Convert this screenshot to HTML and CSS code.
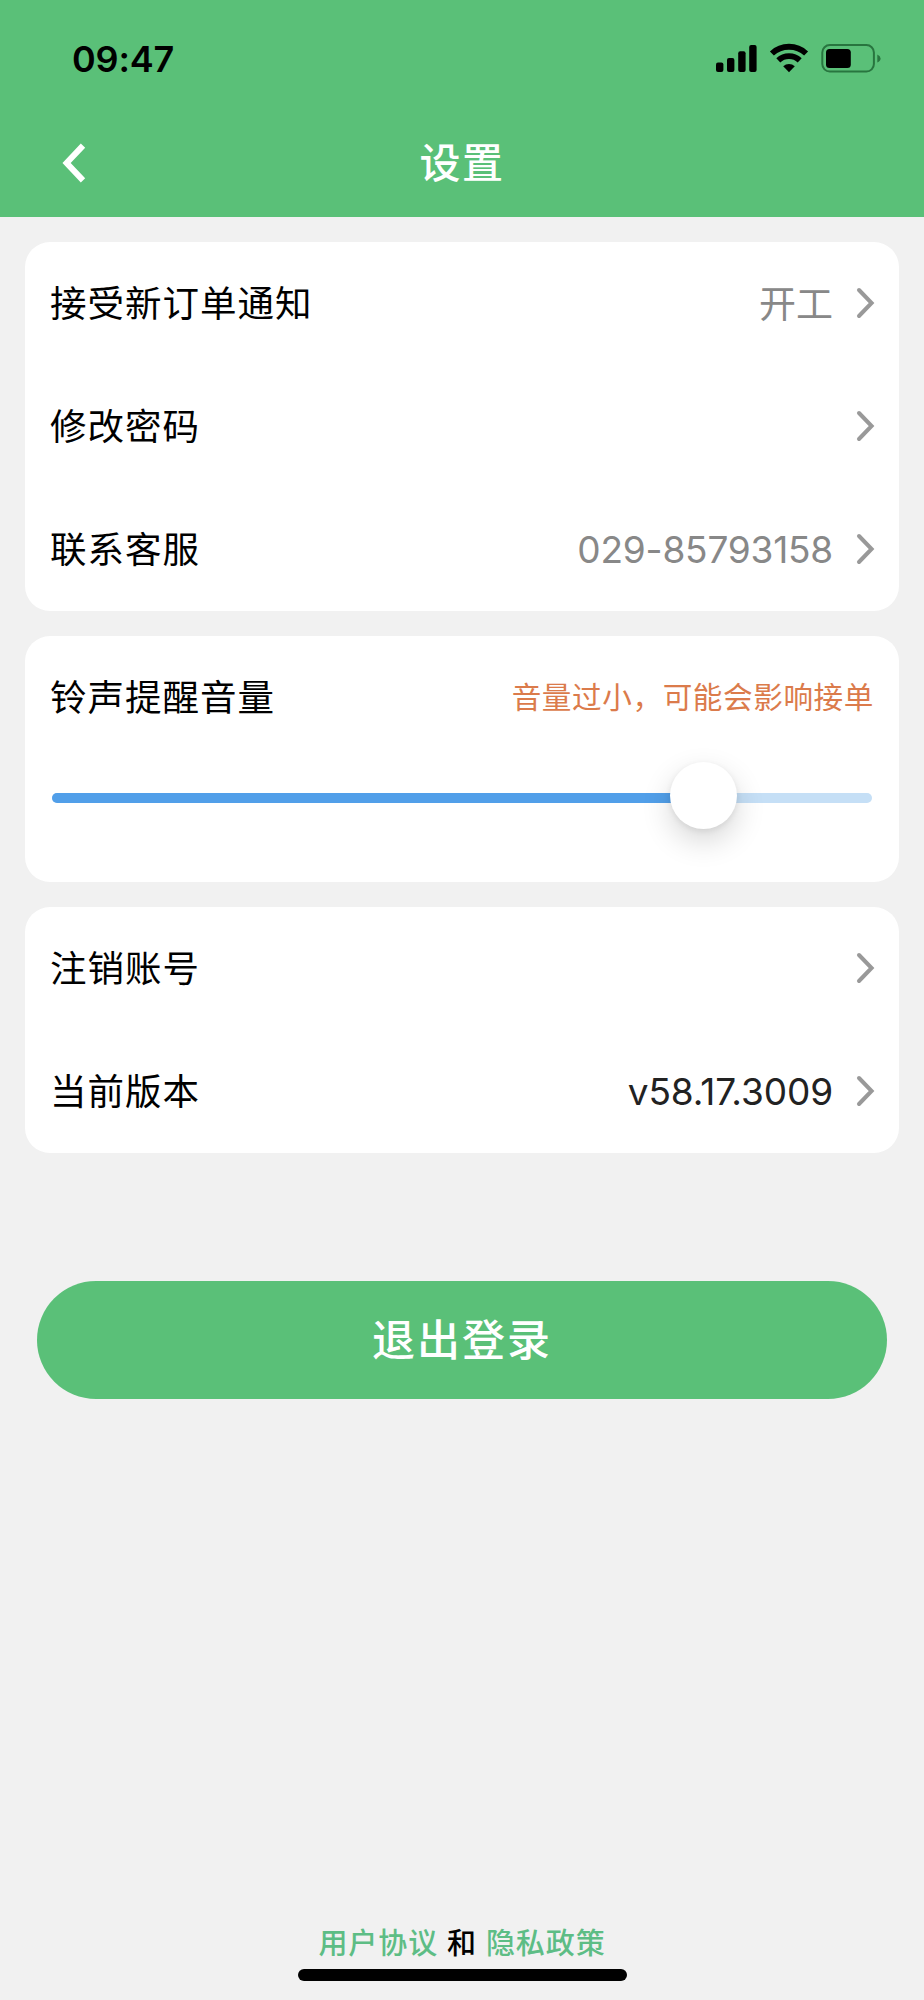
FILE: index.html
```html
<!DOCTYPE html>
<html lang="zh-CN">
<head>
<meta charset="utf-8">
<title>设置</title>
<link rel="stylesheet" href="styles.css">
</head>
<body>
<svg class="defs" width="0" height="0" aria-hidden="true">
  <symbol id="chevron" viewBox="0 0 20 32">
    <path d="M3 3 L15.6 16 L3 29" fill="none" stroke="#999" stroke-width="4" stroke-linecap="round" stroke-linejoin="miter"/>
  </symbol>
</svg>
<div class="screen">
  <header class="header">
    <div class="status">
      <span class="time">09:47</span>
      <svg class="status-icons" width="168" height="32" viewBox="0 0 168 32">
        <rect x="2" y="20.5" width="7.4" height="9.5" rx="2"/>
        <rect x="13" y="16" width="7.4" height="14" rx="2"/>
        <rect x="24.2" y="9.2" width="7.4" height="20.8" rx="2"/>
        <rect x="35.2" y="3" width="7.4" height="27" rx="2"/>
        <g fill="none" stroke="#000" stroke-width="5.8">
          <path d="M57.9 11.5 A25 25 0 0 1 92.1 11.5"/>
          <path d="M64.3 18.4 A15.5 15.5 0 0 1 85.7 18.4"/>
        </g>
        <path d="M75 30.2 L69.2 24.2 A8.4 8.4 0 0 1 80.8 24.2 Z"/>
        <rect x="108.3" y="3" width="51.6" height="26.6" rx="7.5" fill="none" stroke="#28753f" stroke-width="2"/>
        <rect x="112" y="7" width="24.8" height="19" rx="3.5"/>
        <path d="M163.3 12.6 Q166.6 14.2 166.6 16.5 Q166.6 19 163.3 20.4 Z" fill="#28753f"/>
      </svg>
    </div>
    <div class="nav">
      <svg class="back" width="26" height="42" viewBox="0 0 26 42">
        <path d="M22 3.6 L5.6 21 L22 38.4" fill="none" stroke="#fff" stroke-width="6"/>
      </svg>
      <h1 class="title">设置</h1>
    </div>
  </header>

  <main class="content">
    <section class="card">
      <div class="row"><span class="label">接受新订单通知</span><span class="value cjk">开工</span><svg class="arrow"><use href="#chevron"/></svg></div>
      <div class="row"><span class="label">修改密码</span><svg class="arrow"><use href="#chevron"/></svg></div>
      <div class="row"><span class="label">联系客服</span><span class="value phone">029-85793158</span><svg class="arrow"><use href="#chevron"/></svg></div>
    </section>

    <section class="card">
      <div class="row"><span class="label">铃声提醒音量</span><span class="hint">音量过小，可能会影响接单</span></div>
      <div class="slider">
        <div class="track"><div class="fill"></div><div class="thumb"></div></div>
      </div>
    </section>

    <section class="card">
      <div class="row"><span class="label">注销账号</span><svg class="arrow"><use href="#chevron"/></svg></div>
      <div class="row"><span class="label">当前版本</span><span class="value version">v58.17.3009</span><svg class="arrow"><use href="#chevron"/></svg></div>
    </section>

    <button class="logout">退出登录</button>
  </main>

  <footer class="footer">
    <p class="legal"><a class="link">用户协议</a><span>和</span><a class="link">隐私政策</a></p>
    <div class="home-bar"></div>
  </footer>
</div>
</body>
</html>
```

FILE: styles.css
```css
* { box-sizing: border-box; }

body {
  margin: 0;
  background: #f1f1f1;
  color: #000;
  font-family: Inter, "Noto Sans CJK SC", sans-serif;
}

.defs { display: block; }

.screen {
  width: 924px;
  height: 2000px;
  display: flex;
  flex-direction: column;
}

.header {
  height: 216.5px;
  background: #5ac078;
}

.status {
  height: 118px;
  padding: 0 42px 0 72px;
  display: flex;
  align-items: center;
  justify-content: space-between;
}

.time {
  font-size: 36px;
  font-weight: 600;
  line-height: 44px;
  letter-spacing: -0.2px;
}

.status-icons {
  display: block;
  margin-bottom: 2px;
}

.nav {
  height: 90px;
  padding: 0 61px;
  display: grid;
  grid-template-columns: 26px 1fr 26px;
  align-items: center;
}

.title {
  margin: 0;
  color: #fff;
  font-size: 41px;
  font-weight: 500;
  line-height: 60px;
  letter-spacing: 1.6px;
  text-align: center;
}

.content {
  padding: 25px 25px 0;
  display: flex;
  flex-direction: column;
  gap: 24.6px;
}

.card {
  background: #fff;
  border-radius: 25px;
}

.row {
  height: 123.2px;
  padding: 0 23px 0 25px;
  display: flex;
  align-items: center;
}

.label {
  flex: 1;
  padding-bottom: 3px;
  font-size: 36.5px;
  letter-spacing: 1px;
}

.value {
  margin-right: 23px;
  color: #888;
  font-size: 37px;
}

.cjk { padding-bottom: 3px; }

.phone { letter-spacing: -0.2px; }

.version {
  color: #222;
  letter-spacing: -0.1px;
}

.arrow {
  width: 20px;
  height: 32px;
}

.hint {
  padding: 0 2px 3px 0;
  color: #db7b4b;
  font-size: 29.6px;
  letter-spacing: 0.6px;
}

.slider {
  height: 123.2px;
  padding: 34px 27px 0;
}

.track {
  position: relative;
  height: 10.5px;
  border-radius: 5px;
  background: #c5dff6;
}

.fill {
  width: 79.5%;
  height: 100%;
  border-radius: 5px;
  background: #519fe9;
}

.thumb {
  position: absolute;
  left: 79.5%;
  top: -31px;
  width: 67px;
  height: 67px;
  margin-left: -33.5px;
  border-radius: 50%;
  background: #fff;
  box-shadow: 0 12px 30px rgba(0, 0, 0, 0.16), 0 2px 6px rgba(0, 0, 0, 0.08);
}

.logout {
  height: 118.5px;
  margin: 103px 12px 0;
  padding: 0 0 5px;
  border: 0;
  border-radius: 60px;
  background: #5ac078;
  color: #fff;
  font-family: inherit;
  font-size: 43px;
  font-weight: 500;
  letter-spacing: 2px;
}

.footer {
  margin-top: auto;
  padding-bottom: 19px;
  display: flex;
  flex-direction: column;
  align-items: center;
}

.legal {
  margin: 0 0 4px;
  display: flex;
  gap: 9px;
  font-size: 29px;
  font-weight: 500;
  line-height: 42px;
  letter-spacing: 0.9px;
}

.link { color: #5dbd85; }

.home-bar {
  width: 329px;
  height: 12px;
  border-radius: 6px;
  background: #000;
}
```
